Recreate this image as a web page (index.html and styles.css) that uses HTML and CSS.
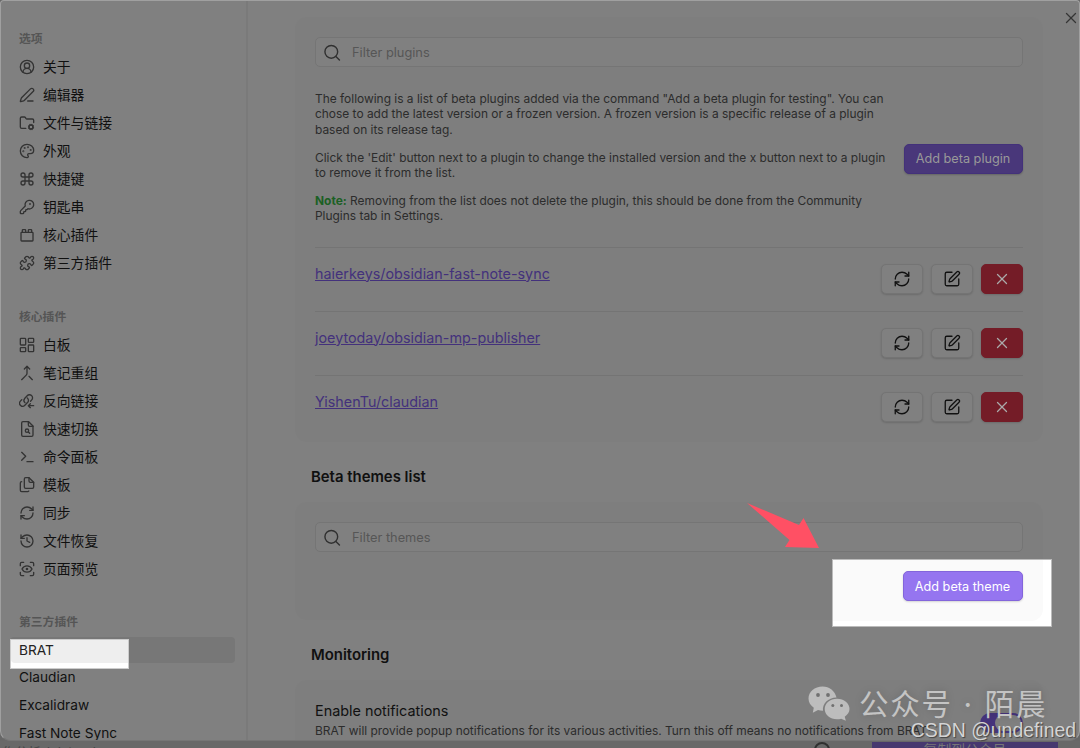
FILE: index.html
```html
<!DOCTYPE html>
<html lang="zh-CN">
<head>
    <meta charset="UTF-8">
    <meta name="viewport" content="width=device-width, initial-scale=1.0">
    <title>BRAT</title>
    <link rel="stylesheet" href="styles.css">
</head>
<body>
    <!-- Iconos compartidos -->
    <svg class="sprite">
        <symbol id="i-search" viewBox="0 0 24 24"><circle cx="11" cy="11" r="9"/><path d="m22.500 22.500-5-5"/></symbol>
        <symbol id="i-sync" viewBox="0 0 24 24"><path d="M3 12a9 9 0 0 1 9-9 9.75 9.75 0 0 1 6.74 2.74L21 8"/><path d="M21 3v5h-5"/><path d="M21 12a9 9 0 0 1-9 9 9.75 9.75 0 0 1-6.74-2.74L3 16"/><path d="M8 16H3v5"/></symbol>
        <symbol id="i-edit" viewBox="0 0 24 24"><path d="M12 3H5a2 2 0 0 0-2 2v14a2 2 0 0 0 2 2h14a2 2 0 0 0 2-2v-7"/><path d="M18.375 2.625a1 1 0 0 1 3 3l-9.013 9.014a2 2 0 0 1-.853.505l-2.873.84a.5.5 0 0 1-.62-.62l.84-2.873a2 2 0 0 1 .506-.852z"/></symbol>
        <symbol id="i-x" viewBox="0 0 24 24"><path d="M18 6 6 18"/><path d="m6 6 12 12"/></symbol>
    </svg>

    <div class="app">
        <div class="modal">
            <nav class="sidebar">
                <div class="group">
                    <div class="group-title">选项</div>
                    <div class="item"><svg viewBox="0 0 24 24"><path d="M18 20a6 6 0 0 0-12 0"/><circle cx="12" cy="10" r="4"/><circle cx="12" cy="12" r="10"/></svg>关于</div>
                    <div class="item"><svg viewBox="0 0 24 24"><path d="M13 21h8"/><path d="M21.174 6.812a1 1 0 0 0-3.986-3.987L3.842 16.174a2 2 0 0 0-.5.83l-1.321 4.352a.5.5 0 0 0 .623.622l4.353-1.32a2 2 0 0 0 .83-.497z"/></svg>编辑器</div>
                    <div class="item"><svg viewBox="0 0 24 24"><path d="M10.3 20H4a2 2 0 0 1-2-2V5a2 2 0 0 1 2-2h3.98a2 2 0 0 1 1.69.9l.66 1.2A2 2 0 0 0 12 6h8a2 2 0 0 1 2 2v3.3"/><circle cx="18" cy="18" r="3"/><path d="m21.7 19.4-.9-.3m-5.6-2.2-.9-.3m2.3 5.1.3-.9m2.2-5.6.3-.9m.2 7.4-.4-1m-2.4-5.4-.4-1m-2.1 5.3 1-.4m5.4-2.4 1-.4"/></svg>文件与链接</div>
                    <div class="item"><svg viewBox="0 0 24 24"><path d="M12 22a1 1 0 0 1 0-20 10 9 0 0 1 10 9 5 5 0 0 1-5 5h-2.25a1.75 1.75 0 0 0-1.4 2.8l.3.4a1.75 1.75 0 0 1-1.4 2.8z"/><circle cx="13.5" cy="6.5" r=".5"/><circle cx="17.5" cy="10.5" r=".5"/><circle cx="6.5" cy="12.5" r=".5"/><circle cx="8.5" cy="7.5" r=".5"/></svg>外观</div>
                    <div class="item"><svg viewBox="0 0 24 24"><path d="M15 6v12a3 3 0 1 0 3-3H6a3 3 0 1 0 3 3V6a3 3 0 1 0-3 3h12a3 3 0 1 0-3-3"/></svg>快捷键</div>
                    <div class="item"><svg viewBox="0 0 24 24"><path d="M2.586 17.414A2 2 0 0 0 2 18.828V21a1 1 0 0 0 1 1h3a1 1 0 0 0 1-1v-1a1 1 0 0 1 1-1h1a1 1 0 0 0 1-1v-1a1 1 0 0 1 1-1h.172a2 2 0 0 0 1.414-.586l.814-.814a6.5 6.5 0 1 0-4-4z"/><circle cx="16.5" cy="7.5" r=".5"/></svg>钥匙串</div>
                    <div class="item"><svg viewBox="0 0 24 24"><rect x="3" y="8" width="18" height="13" rx="1"/><path d="M10 8V5a1 1 0 0 0-1-1H6a1 1 0 0 0-1 1v3m14 0V5a1 1 0 0 0-1-1h-3a1 1 0 0 0-1 1v3"/></svg>核心插件</div>
                    <div class="item"><svg viewBox="0 0 24 24"><path d="M15.39 4.39a1 1 0 0 0 1.68-.474 2.5 2.5 0 1 1 3.014 3.015 1 1 0 0 0-.474 1.68l1.683 1.682a2.414 2.414 0 0 1 0 3.414L19.61 15.39a1 1 0 0 1-1.68-.474 2.5 2.5 0 1 0-3.014 3.015 1 1 0 0 1 .474 1.68l-1.683 1.682a2.414 2.414 0 0 1-3.414 0L8.61 19.61a1 1 0 0 0-1.68.474 2.5 2.5 0 1 1-3.014-3.015 1 1 0 0 0 .474-1.68l-1.683-1.682a2.414 2.414 0 0 1 0-3.414L4.39 8.61a1 1 0 0 1 1.68.474 2.5 2.5 0 1 0 3.014-3.015 1 1 0 0 1-.474-1.68l1.683-1.682a2.414 2.414 0 0 1 3.414 0z"/></svg>第三方插件</div>
                </div>
                <div class="group">
                    <div class="group-title">核心插件</div>
                    <div class="item"><svg viewBox="0 0 24 24"><rect x="2" y="2" width="8" height="10" rx="1"/><rect x="14" y="2" width="8" height="6" rx="1"/><rect x="14" y="12" width="8" height="10" rx="1"/><rect x="2" y="16" width="8" height="6" rx="1"/></svg>白板</div>
                    <div class="item"><svg viewBox="0 0 24 24"><path d="m8 6 4-4 4 4"/><path d="M12 2v10.3a4 4 0 0 1-1.172 2.872L4 22"/><path d="m20 22-5-5"/></svg>笔记重组</div>
                    <div class="item"><svg viewBox="0 0 24 24"><path d="M9 14.5a4.6 4.6 0 0 1-.6-6.2l3.900-4.200a4.600 4.600 0 0 1 6.800 6.200l-1.800 2"/><path d="M12.500 7.500a4.600 4.600 0 0 1 .6 6.500l-4.300 4.500a4.600 4.600 0 0 1-6.700-6.300l2-2"/><path d="M22 19h-8m3-3-3 3 3 3"/></svg>反向链接</div>
                    <div class="item"><svg viewBox="0 0 24 24"><path d="M14.500 1H6a2 2 0 0 0-2 2v18a2 2 0 0 0 2 2h13a2 2 0 0 0 2-2V7.500z"/><path d="M14 1v5a2 2 0 0 0 2 2h5"/><circle cx="12" cy="14.500" r="2.500"/><path d="m14 16.500 2 2"/></svg>快速切换</div>
                    <div class="item"><svg viewBox="0 0 24 24"><path d="M12 19h9"/><path d="m4 17 6-6-6-6"/></svg>命令面板</div>
                    <div class="item"><svg viewBox="0 0 24 24"><path d="M15 1h-5a2 2 0 0 0-2 2v12a2 2 0 0 0 2 2h10a2 2 0 0 0 2-2V8z"/><path d="M15 1v5a2 2 0 0 0 2 2h5"/><path d="M4 7a2 2 0 0 0-2 2v11a2 2 0 0 0 2 2h9a2 2 0 0 0 1.700-1"/></svg>模板</div>
                    <div class="item"><svg><use href="#i-sync"/></svg>同步</div>
                    <div class="item"><svg viewBox="0 0 24 24"><path d="M3 12a9 9 0 1 0 9-9 9.750 9.750 0 0 0-6.740 2.740L3 8"/><path d="M3 3v5h5"/><path d="M12 7v5l4 2"/></svg>文件恢复</div>
                    <div class="item"><svg viewBox="0 0 24 24"><path d="M2 7V4a2 2 0 0 1 2-2h3m10 0h3a2 2 0 0 1 2 2v3m0 10v3a2 2 0 0 1-2 2h-3M7 22H4a2 2 0 0 1-2-2v-3"/><circle cx="12" cy="12" r="1"/><path d="M4.500 12a8.300 8.300 0 0 1 15 0 8.300 8.300 0 0 1-15 0"/></svg>页面预览</div>
                </div>
                <div class="group">
                    <div class="group-title">第三方插件</div>
                    <div class="item latin active">BRAT</div>
                    <div class="item latin">Claudian</div>
                    <div class="item latin">Excalidraw</div>
                    <div class="item latin">Fast Note Sync</div>
                </div>
            </nav>

            <main class="content">
                <section class="card card-plugins">
                    <div class="search"><svg><use href="#i-search"/></svg><span>Filter plugins</span></div>
                    <div class="intro">
                        <div class="desc">
                            <p>The following is a list of beta plugins added via the command "Add a beta plugin for testing". You can<br>chose to add the latest version or a frozen version. A frozen version is a specific release of a plugin<br>based on its release tag.</p>
                            <p>Click the 'Edit' button next to a plugin to change the installed version and the x button next to a plugin<br>to remove it from the list.</p>
                            <p><b>Note:</b> Removing from the list does not delete the plugin, this should be done from the Community<br>Plugins tab in Settings.</p>
                        </div>
                        <button type="button" class="btn-add">Add beta plugin</button>
                    </div>
                    <div class="row">
                        <a>haierkeys/obsidian-fast-note-sync</a>
                        <div class="actions">
                            <button type="button"><svg><use href="#i-sync"/></svg></button>
                            <button type="button"><svg><use href="#i-edit"/></svg></button>
                            <button type="button" class="danger"><svg><use href="#i-x"/></svg></button>
                        </div>
                    </div>
                    <div class="row">
                        <a>joeytoday/obsidian-mp-publisher</a>
                        <div class="actions">
                            <button type="button"><svg><use href="#i-sync"/></svg></button>
                            <button type="button"><svg><use href="#i-edit"/></svg></button>
                            <button type="button" class="danger"><svg><use href="#i-x"/></svg></button>
                        </div>
                    </div>
                    <div class="row">
                        <a>YishenTu/claudian</a>
                        <div class="actions">
                            <button type="button"><svg><use href="#i-sync"/></svg></button>
                            <button type="button"><svg><use href="#i-edit"/></svg></button>
                            <button type="button" class="danger"><svg><use href="#i-x"/></svg></button>
                        </div>
                    </div>
                </section>

                <h2>Beta themes list</h2>
                <section class="card card-themes">
                    <div class="search"><svg><use href="#i-search"/></svg><span>Filter themes</span></div>
                </section>

                <h2>Monitoring</h2>
                <section class="card card-monitoring">
                    <h3>Enable notifications</h3>
                    <p>BRAT will provide popup notifications for its various activities. Turn this off means no notifications from BRAT</p>
                    <div class="toggle"></div>
                </section>
            </main>
            <svg class="close"><use href="#i-x"/></svg>
        </div>

        <!-- Ventana que queda detrás -->
        <div class="behind">
            <span class="behind-text">作分析 / data-sk</span>
            <span class="behind-help"></span>
            <span class="behind-btn">复制到公众号</span>
        </div>
    </div>

    <!-- Zonas resaltadas -->
    <div class="spot spot-brat"><div class="spot-item">BRAT</div></div>
    <div class="spot spot-theme"><div class="spot-card"><button type="button" class="btn-add">Add beta theme</button></div></div>
    <svg class="arrow" viewBox="0 0 74 46"><path d="M1 0 53 22 57.500 15 73 45 39 44 43.500 37z"/></svg>

    <!-- Marcas de agua -->
    <div class="mark">
        <svg viewBox="0 0 42 35"><path class="bubble" d="M14.500.5C6.700.5.500 5.800.500 12.500c0 3.800 2 7 5.300 9.200L4.800 26.700l5.200-2.600c1.500.4 3 .6 5 .6-.8-7 5-13 13.500-13.200C27 5 21.500.5 14.500.5z"/><path class="bubble" d="M29 12.700c-7 0-12.300 4.600-12.300 10.400S22 33.300 29 33.300c1.500 0 2.800-.2 4.200-.6l4.700 2.100-1.200-4c3-2 4.800-4.600 4.800-7.700 0-5.800-5.500-10.400-12.500-10.400z"/><g class="eye"><circle cx="10" cy="9" r="1.900"/><circle cx="20" cy="9" r="1.900"/><circle cx="24.800" cy="19.500" r="1.500"/><circle cx="33.500" cy="19.500" r="1.500"/></g></svg>
        <span>公众号 · 陌晨</span>
    </div>
    <div class="csdn">CSDN @undefined</div>
</body>
</html>
```
FILE: styles.css
```css
* {
    box-sizing: border-box;
}

body {
    margin: 0;
    width: 1080px;
    height: 748px;
    overflow: hidden;
    position: relative;
    background: #676767;
    font-family: Inter, "Noto Sans CJK SC", sans-serif;
    color: #111;
}

h2, h3, p {
    margin: 0;
    white-space: nowrap;
}

svg {
    fill: none;
    stroke: currentColor;
    stroke-width: 2;
    stroke-linecap: round;
    stroke-linejoin: round;
}

.sprite {
    display: none;
}

.app {
    height: 748px;
    display: flex;
    flex-direction: column;
}

.modal {
    position: relative;
    display: flex;
    height: 741px;
    flex: none;
    overflow: hidden;
    background: #808080;
    border: 1px solid #a0a0a0;
    border-bottom-color: #757575;
    border-radius: 4px 4px 10px 10px;
}

/* Barra lateral */
.sidebar {
    width: 247px;
    flex: none;
    padding: 26px 11px 0 9px;
    border-right: 2px solid #7a7a7a;
}

.group {
    margin-bottom: 27.5px;
}

.group-title {
    height: 26px;
    line-height: 24px;
    padding-left: 9px;
    font-size: 11.8px;
    font-weight: 600;
    color: #555;
}

.item {
    display: flex;
    align-items: center;
    gap: 8px;
    height: 28px;
    padding: 0 0 2px 9px;
    font-size: 13.8px;
    white-space: nowrap;
    color: #101010;
}

.item svg {
    width: 16px;
    height: 16px;
    margin-top: 2px;
    color: #333;
}

.latin {
    font-size: 13.7px;
}

.active {
    height: 26px;
    margin: 1px 0;
    border-radius: 4px;
    background: #777;
}

/* Contenido */
.content {
    flex: 1;
    padding: 16px 37px 0 47px;
}

.card {
    width: 747.5px;
    padding: 20px 20px 0;
    border-radius: 12px;
    background: #7e7e7e;
}

.card-plugins {
    height: 425px;
}

.card-themes {
    height: 118px;
}

.card-monitoring {
    position: relative;
    height: 100px;
}

.search {
    display: flex;
    align-items: center;
    gap: 11px;
    height: 30px;
    padding-left: 7px;
    border: 1px solid #757575;
    border-radius: 5px;
    background: #808080;
    font-size: 12.8px;
    color: #565656;
}

.search svg {
    width: 18px;
    height: 17px;
    color: #303030;
}

.intro {
    display: flex;
    align-items: center;
    justify-content: space-between;
    height: 179.5px;
    padding-top: 1px;
}

.desc {
    display: flex;
    flex-direction: column;
    gap: 12.2px;
    width: 576px;
    font-size: 11.93px;
    line-height: 15.5px;
    color: #2c2c2c;
}

.desc b {
    color: #1b6024;
}

.btn-add {
    width: 119px;
    height: 30px;
    padding: 0;
    border: 1px solid #43317a;
    border-radius: 5px;
    background: #49377a;
    box-shadow: 0 1px 2px rgba(0, 0, 0, .2);
    font-family: inherit;
    font-size: 12.7px;
    white-space: nowrap;
    color: #999;
}

.intro .btn-add {
    margin-top: 3px;
}

.row {
    display: flex;
    justify-content: space-between;
    height: 64px;
    padding-top: 16px;
    border-top: 1px solid #747474;
}

.row a {
    height: 21px;
    margin-top: -1px;
    line-height: 21px;
    font-size: 14.35px;
    color: #43317c;
    text-decoration: underline;
}

.actions {
    display: flex;
    gap: 8px;
}

.actions button {
    display: flex;
    align-items: center;
    justify-content: center;
    width: 41.7px;
    height: 30px;
    padding: 0;
    border: 1px solid #747474;
    border-radius: 5px;
    background: #808080;
    box-shadow: 0 1px 2px rgba(0, 0, 0, .15);
    color: #111;
}

.actions svg {
    width: 18px;
    height: 18px;
    stroke-width: 1.75;
}

.actions .danger {
    border-color: #741c27;
    background: #741c27;
    color: #aaa;
}

h2 {
    height: 60px;
    padding: 23px 0 0 16px;
    font-size: 14.9px;
    line-height: 24px;
    font-weight: 600;
    color: #101010;
}

h3 {
    font-size: 14.4px;
    font-weight: 400;
    line-height: 21px;
}

.card-monitoring p {
    font-size: 11.93px;
    line-height: 20px;
    color: #2c2c2c;
}

.toggle {
    position: absolute;
    right: 20px;
    top: 33px;
    width: 43px;
    height: 20px;
    border-radius: 10px;
    background: #46347c;
}

.toggle::after {
    content: "";
    display: block;
    position: relative;
    top: 2px;
    width: 26px;
    height: 16px;
    margin-left: 15px;
    border-radius: 8px;
    background: #808080;
}

.close {
    position: absolute;
    top: 8px;
    right: -1px;
    width: 18px;
    height: 18px;
    color: #353535;
    stroke-width: 1.75;
}

/* Ventana de fondo */
.behind {
    display: flex;
    height: 7px;
    overflow: hidden;
    background: #686868;
}

.behind-text {
    width: 814px;
    flex: none;
    padding-left: 2px;
    font-size: 13px;
    line-height: 23px;
    color: #444;
}

.behind-help {
    width: 16px;
    height: 16px;
    margin-top: 1px;
    border: 2px solid #303030;
    border-radius: 50%;
}

.behind-btn {
    width: 186px;
    height: 20px;
    margin: 1px 0 0 42px;
    background: #47386f;
    font-size: 13.8px;
    line-height: 17px;
    text-align: center;
    color: #777;
}

/* Recortes iluminados */
.spot {
    position: absolute;
    overflow: hidden;
    background: #fff;
}

.spot-brat {
    left: 10px;
    top: 639px;
    width: 119px;
    height: 30px;
    border: 1px solid #ccc;
}

.spot-item {
    height: 23px;
    padding-left: 8px;
    border-radius: 0 0 0 4px;
    background: #eee;
    font-size: 13.7px;
    line-height: 20px;
    color: #222;
}

.spot-theme {
    left: 831.5px;
    top: 559px;
    width: 220px;
    height: 68px;
    border: 1px solid #bbb;
}

.spot-card {
    display: flex;
    justify-content: flex-end;
    width: 210px;
    height: 61px;
    padding: 11px 20px 0 0;
    border-radius: 0 0 12px 0;
    background: #fafafa;
}

.spot-card .btn-add {
    width: 120px;
    border-color: #8365db;
    background: #9575f0;
    box-shadow: 0 1px 2px rgba(0, 0, 0, .15);
    color: #fff;
}

.arrow {
    position: absolute;
    left: 746px;
    top: 503px;
    width: 74px;
    height: 46px;
    fill: #ff5064;
    stroke: none;
}

/* Marcas de agua */
.mark {
    position: absolute;
    left: 808px;
    top: 684px;
    display: flex;
    align-items: center;
    gap: 9px;
    height: 38px;
    font-size: 29.5px;
    letter-spacing: 1.7px;
    word-spacing: 1px;
    white-space: nowrap;
    color: #c4c4c4;
    text-shadow: 0 0 8px rgba(0, 0, 0, .2);
}

.mark svg {
    width: 42px;
    height: 35px;
    stroke: none;
}

.mark span {
    margin-top: -2px;
}

.bubble {
    fill: #bdbdbd;
}

.eye {
    fill: #707070;
}

.csdn {
    position: absolute;
    right: 4px;
    top: 718px;
    font-family: "Liberation Sans", sans-serif;
    font-size: 19.4px;
    line-height: 24px;
    color: #d4d4d4;
    text-shadow: 1px 1px 1px #444;
}
```
